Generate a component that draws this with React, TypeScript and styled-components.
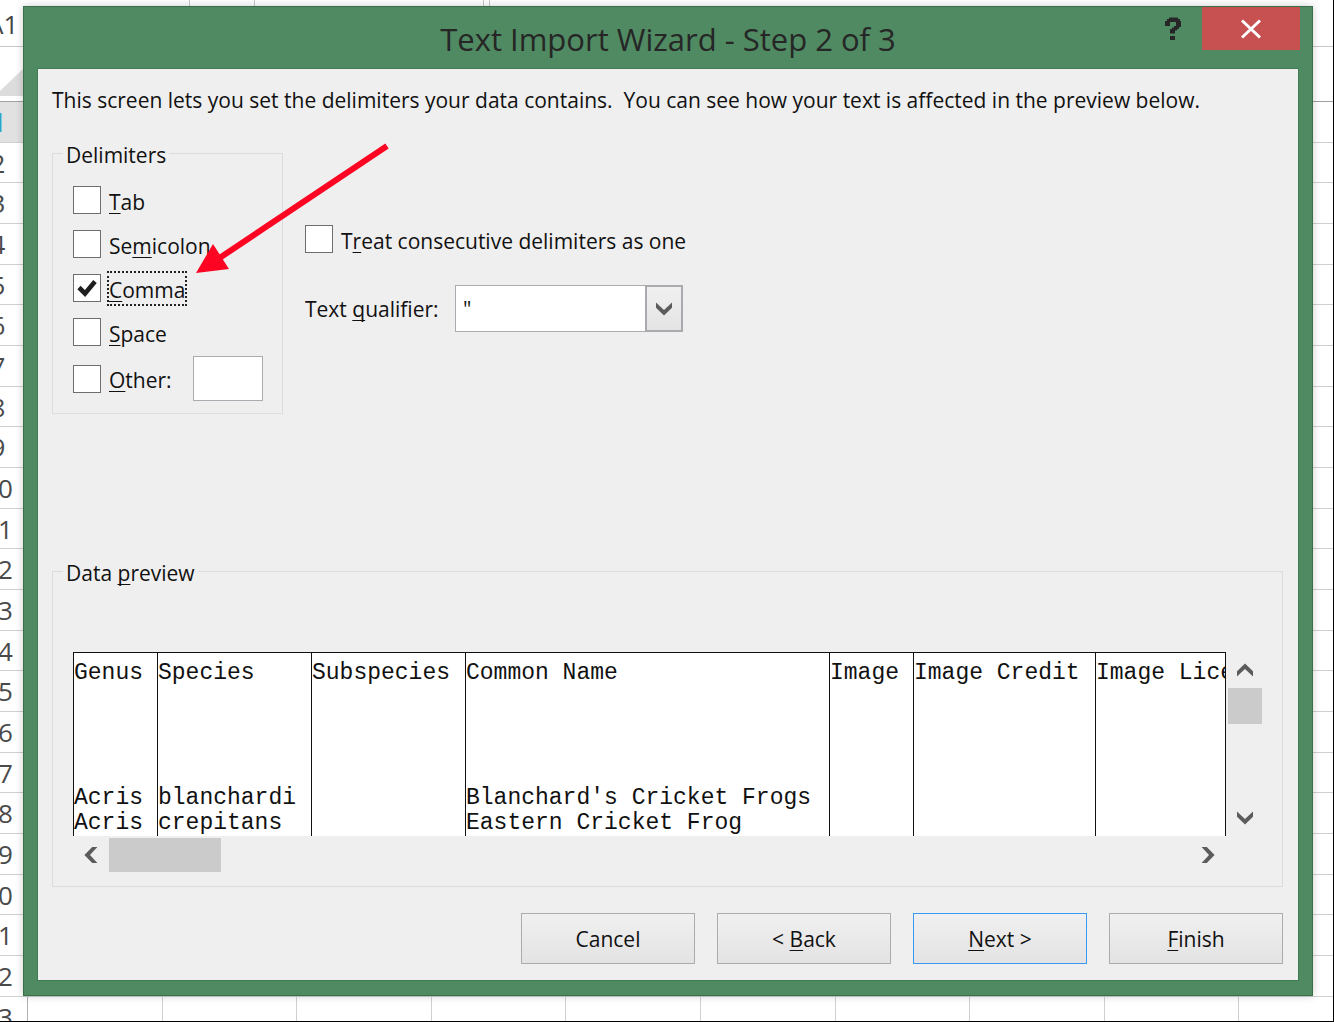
import React from "react";
import styled, { createGlobalStyle } from "styled-components";

const GlobalStyle = createGlobalStyle`
  *, *::before, *::after { box-sizing: border-box; }
  body {
    margin: 0;
    background: #fff;
    color: #111;
    font-family: "Open Sans", "Noto Sans", sans-serif;
    font-size: 21px;
    line-height: 28px;
  }
  button, input, select { font: inherit; color: inherit; margin: 0; padding: 0; border-radius: 0; }
  u { text-decoration-thickness: 1px; text-underline-offset: 3px; text-decoration-skip-ink: none; }
`;

const Desktop = styled.div`
  display: grid;
  grid-template: minmax(0, 1fr) / minmax(0, 1fr);
  height: 100vh;
  min-height: 940px;
  overflow: hidden;
  border: solid #000;
  border-width: 0 1px 1px 0;
`;

/* Worksheet behind the dialog */

const Sheet = styled.div`
  grid-area: 1 / 1;
  display: flex;
  flex-direction: column;
  min-width: 0;
  overflow: hidden;
  color: #444;
  font-size: 26px;
  line-height: 40px;
`;

const FormulaBar = styled.div`
  display: flex;
  flex: none;
  height: 47px;
  border-bottom: 1px solid #c8c8c8;
`;

const NameBox = styled.div`
  width: 190px;
  padding-top: 4px;
  border-right: 1px solid #c8c8c8;
  text-indent: -13px;
`;

const BarCell = styled.div<{ $width: number }>`
  width: ${(p) => p.$width}px;
  border-right: 1px solid #c8c8c8;
`;

const ColumnHeads = styled.div`
  flex: none;
  height: 55px;
  padding-top: 18px;
  border-bottom: 1px solid #a0a0a0;
`;

const SelectAll = styled.div`
  width: 27px;
  height: 31px;
  background: #dcdcdc;
  clip-path: polygon(0 100%, 0 84%, 100% 0, 100% 100%);
`;

const SheetRow = styled.div<{ $share: number; $last?: boolean }>`
  display: flex;
  flex: ${(p) => p.$share} 1 0;
  min-height: 0;
  border-bottom: ${(p) => (p.$last ? "0" : "1px solid #d0d0d0")};
`;

const RowHead = styled.div<{ $active?: boolean }>`
  flex: none;
  width: 59px;
  margin-left: -31px;
  border-right: 1px solid #b0b0b0;
  text-align: center;
  background: ${(p) => (p.$active ? "#e1e1e1" : "#fff")};
  color: ${(p) => (p.$active ? "#2ea3c4" : "#4a4a4a")};
  font-weight: ${(p) => (p.$active ? 700 : 400)};
`;

const SheetCell = styled.div<{ $share: number }>`
  flex: ${(p) => p.$share} 1 0;
  border-right: 1px solid #d0d0d0;
  &:last-child { border-right: 0; }
`;

/* Dialog */

const Dialog = styled.section`
  grid-area: 1 / 1;
  z-index: 1;
  display: flex;
  flex-direction: column;
  min-width: 0;
  margin: 6px 20px 25px 23px;
  border: 1px solid #37704b;
  background: #508a62;
  box-shadow: 0 0 8px rgba(0, 0, 0, 0.2);
`;

const TitleBar = styled.header`
  display: grid;
  grid-template-columns: 1fr auto 1fr;
  height: 61px;
`;

const Title = styled.h1`
  grid-column: 2;
  margin: 0;
  color: #262626;
  font-size: 31px;
  font-weight: 400;
  line-height: 64px;
`;

const WindowButtons = styled.div`
  display: flex;
  justify-content: flex-end;
  align-items: flex-start;
  padding-right: 12px;
`;

const WindowButton = styled.button<{ $close?: boolean }>`
  display: grid;
  place-items: center;
  width: ${(p) => (p.$close ? 98 : 58)}px;
  height: 43px;
  border: 0;
  background: ${(p) => (p.$close ? "#c75050" : "transparent")};
`;

const Panel = styled.form`
  display: flex;
  flex: 1;
  flex-direction: column;
  margin: 0 13px 14px;
  padding: 17px 15px 16px 14px;
  border: 1px solid #3f7b53;
  background: #efefef;
`;

const Intro = styled.p`
  margin: 0 0 25px;
  white-space: pre-wrap;
`;

const Options = styled.div`
  position: relative;
  display: flex;
  align-items: flex-start;
  gap: 22px;
`;

const Group = styled.fieldset`
  min-width: 0;
  margin: 0;
  padding: 0 10px 12px;
  border: 1px solid #dcdcdc;
`;

const Legend = styled.legend`
  padding: 4px 3px 0;
  line-height: 24px;
`;

const DelimiterList = styled.div`
  display: grid;
  gap: 16px;
  width: 209px;
  padding: 19px 0 10px 10px;
`;

const OtherRow = styled.div`
  display: flex;
  justify-content: space-between;
  align-items: center;
  padding: 0 9px 0 10px;
`;

const CheckLabel = styled.label`
  display: flex;
  align-items: center;
  gap: 8px;
  height: 28px;
`;

const CheckCell = styled.span`
  display: grid;
  width: 28px;
  height: 28px;
  > * { grid-area: 1 / 1; }
  > svg { place-self: center; pointer-events: none; }
`;

const CheckInput = styled.input`
  appearance: none;
  width: 28px;
  height: 28px;
  border: 1px solid #6e6e6e;
  background: #fff;
`;

const CheckText = styled.span<{ $focused?: boolean }>`
  padding-top: 3px;
  outline: ${(p) => (p.$focused ? "2px dotted #222" : "none")};
`;

const OtherInput = styled.input`
  width: 70px;
  height: 45px;
  padding: 0 8px;
  border: 1px solid #ababb2;
  background: #fff;
`;

const SideOptions = styled.div`
  display: grid;
  gap: 32px;
  padding-top: 86px;
`;

const QualifierRow = styled.div`
  display: flex;
  align-items: center;
  > label { width: 150px; }
`;

const SelectFrame = styled.div`
  display: grid;
  grid-template-columns: 1fr 38px;
  width: 228px;
  height: 47px;
`;

const Select = styled.select`
  grid-area: 1 / 1 / 2 / 3;
  appearance: none;
  padding: 0 44px 0 7px;
  border: 1px solid #ababb2;
  background: #fff;
`;

const SelectArrow = styled.span`
  grid-area: 1 / 2;
  z-index: 1;
  display: grid;
  place-items: center;
  border: 2px solid #a9a9ae;
  background: linear-gradient(#f0f0f0, #e4e4e4);
  pointer-events: none;
`;

const Pointer = styled.svg`
  position: absolute;
  left: 144px;
  top: 4px;
  pointer-events: none;
`;

const PreviewGroup = styled(Group)`
  margin-top: auto;
  padding-bottom: 14px;
`;

const PreviewGrid = styled.div`
  display: grid;
  grid-template-columns: minmax(0, 1fr) 34px;
  gap: 2px;
  padding: 67px 10px 0;
`;

const TableFrame = styled.div`
  height: 184px;
  overflow: hidden;
  border: solid #111;
  border-width: 1px 1px 0 0;
  background: #fff;
`;

const DataTable = styled.table`
  width: 100%;
  table-layout: fixed;
  border-collapse: separate;
  border-spacing: 0;
  font-family: "Courier New", "Liberation Mono", monospace;
  font-size: 23px;
  line-height: 25px;
  th, td {
    height: 25px;
    padding: 0;
    overflow: hidden;
    border-left: 1px solid #111;
    font-weight: 400;
    text-align: left;
    white-space: nowrap;
  }
  th { height: 33px; padding-top: 8px; }
`;

const ScrollBar = styled.div<{ $vertical?: boolean }>`
  display: flex;
  flex-direction: ${(p) => (p.$vertical ? "column" : "row")};
`;

const ScrollButton = styled.button`
  display: grid;
  place-items: center;
  flex: none;
  width: 36px;
  height: 34px;
  border: 0;
  background: transparent;
`;

const VerticalButton = styled(ScrollButton)`
  width: 34px;
  height: 36px;
`;

const Track = styled.div`
  flex: 1;
`;

const Thumb = styled.div<{ $vertical?: boolean }>`
  width: ${(p) => (p.$vertical ? "34px" : "112px")};
  height: ${(p) => (p.$vertical ? "36px" : "34px")};
  background: #cbcbcb;
`;

const Actions = styled.footer`
  display: flex;
  justify-content: flex-end;
  gap: 22px;
  margin-top: 26px;
`;

const ActionButton = styled.button<{ $primary?: boolean }>`
  width: 174px;
  height: 51px;
  border: 1px solid ${(p) => (p.$primary ? "#3c97f2" : "#acacac")};
  background: linear-gradient(#f0f0f0, #e3e3e3);
`;

const turns = { down: 0, left: 90, up: 180, right: 270 };

const Chevron = ({ to }: { to: keyof typeof turns }) => (
  <svg width="18" height="18" viewBox="0 0 18 18" aria-hidden="true">
    <path
      d="M1 2.6 L9 10 L17 2.6 V7.8 L9 15.6 L1 7.8 Z"
      fill="#5c5c5c"
      transform={`rotate(${turns[to]} 9 9)`}
    />
  </svg>
);

type CheckProps = { checked?: boolean; focused?: boolean; children: React.ReactNode };

const Check = ({ checked = false, focused, children }: CheckProps) => {
  const [on, setOn] = React.useState(checked);
  return (
    <CheckLabel>
      <CheckCell>
        <CheckInput type="checkbox" checked={on} onChange={() => setOn(!on)} />
        {on && (
          <svg width="20" height="18" viewBox="0 0 20 18" aria-hidden="true">
            <path d="M2 8.5 L8 14.5 L18 2.5" fill="none" stroke="#1e1e1e" strokeWidth="4.6" />
          </svg>
        )}
      </CheckCell>
      <CheckText $focused={focused}>{children}</CheckText>
    </CheckLabel>
  );
};

const columns: { name: string; width?: number }[] = [
  { name: "Genus", width: 84 },
  { name: "Species", width: 154 },
  { name: "Subspecies", width: 154 },
  { name: "Common Name", width: 364 },
  { name: "Image", width: 84 },
  { name: "Image Credit", width: 182 },
  { name: "Image License" },
];

const records: string[][] = [
  [],
  [],
  [],
  [],
  ["Acris", "blanchardi", "", "Blanchard's Cricket Frogs"],
  ["Acris", "crepitans", "", "Eastern Cricket Frog"],
];

const rowNumbers = Array.from({ length: 23 }, (_, i) => i + 1);
const lastRow = rowNumbers.length;

/* Nine whole worksheet columns, then the part of the tenth that fits. */
const cellShares = [10, 10, 10, 10, 10, 10, 10, 10, 10, 7];

export default function App() {
  return (
    <>
      <GlobalStyle />
      <Desktop>
        <Sheet>
          <FormulaBar>
            <NameBox>A1</NameBox>
            <BarCell $width={65} />
            <BarCell $width={229} />
            <BarCell $width={6} />
          </FormulaBar>
          <ColumnHeads>
            <SelectAll />
          </ColumnHeads>
          {rowNumbers.map((n) => (
            <SheetRow key={n} $share={n === lastRow ? 25 : 41} $last={n === lastRow}>
              <RowHead $active={n === 1}>{n}</RowHead>
              {cellShares.map((share, i) => (
                <SheetCell key={i} $share={share} />
              ))}
            </SheetRow>
          ))}
        </Sheet>

        <Dialog role="dialog" aria-labelledby="wizard-title">
          <TitleBar>
            <Title id="wizard-title">Text Import Wizard - Step 2 of 3</Title>
            <WindowButtons>
              <WindowButton type="button" aria-label="Help">
                <svg width="18" height="24" viewBox="0 0 18 24" aria-hidden="true">
                  <path
                    d="M1 9 V4 H3 V2 H5 V0.5 H14 V2 H16 V4 H17 V10 H15 V12 H13 V13.5 H11 V16.5 H6 V12 H8 V10.5 H10 V9 H12 V5 H6 V9 Z M6 19 H11 V23 H6 Z"
                    fill="#262626"
                  />
                </svg>
              </WindowButton>
              <WindowButton type="button" $close aria-label="Close">
                <svg width="22" height="20" viewBox="0 0 22 20" aria-hidden="true">
                  <path d="M2 1.5 L20 18.5 M20 1.5 L2 18.5" stroke="#fff" strokeWidth="3" />
                </svg>
              </WindowButton>
            </WindowButtons>
          </TitleBar>

          <Panel onSubmit={(e) => e.preventDefault()}>
            <Intro>
              {"This screen lets you set the delimiters your data contains.  You can see how your text is affected in the preview below."}
            </Intro>

            <Options>
              <Group>
                <Legend>Delimiters</Legend>
                <DelimiterList>
                  <Check><u>T</u>ab</Check>
                  <Check>Se<u>m</u>icolon</Check>
                  <Check checked focused><u>C</u>omma</Check>
                  <Check><u>S</u>pace</Check>
                </DelimiterList>
                <OtherRow>
                  <Check><u>O</u>ther:</Check>
                  <OtherInput type="text" aria-label="Other delimiter" />
                </OtherRow>
              </Group>

              <SideOptions>
                <Check>T<u>r</u>eat consecutive delimiters as one</Check>
                <QualifierRow>
                  <label htmlFor="qualifier">Text <u>q</u>ualifier:</label>
                  <SelectFrame>
                    <Select id="qualifier" defaultValue={'"'}>
                      <option>{'"'}</option>
                    </Select>
                    <SelectArrow>
                      <Chevron to="down" />
                    </SelectArrow>
                  </SelectFrame>
                </QualifierRow>
              </SideOptions>

              <Pointer width="194" height="132" viewBox="0 0 194 132" aria-hidden="true">
                <path d="M191 3 L22 116" stroke="#fe0423" strokeWidth="6" />
                <path d="M0 130 L17 101 L33 126 Z" fill="#fe0423" />
              </Pointer>
            </Options>

            <PreviewGroup>
              <Legend>Data <u>p</u>review</Legend>
              <PreviewGrid>
                <TableFrame>
                  <DataTable>
                    <colgroup>
                      {columns.map((c) => (
                        <col key={c.name} width={c.width} />
                      ))}
                    </colgroup>
                    <thead>
                      <tr>
                        {columns.map((c) => (
                          <th key={c.name} scope="col">{c.name}</th>
                        ))}
                      </tr>
                    </thead>
                    <tbody>
                      {records.map((record, r) => (
                        <tr key={r}>
                          {columns.map((c, i) => (
                            <td key={c.name}>{record[i]}</td>
                          ))}
                        </tr>
                      ))}
                    </tbody>
                  </DataTable>
                </TableFrame>
                <ScrollBar $vertical>
                  <VerticalButton type="button" aria-label="Scroll up">
                    <Chevron to="up" />
                  </VerticalButton>
                  <Track>
                    <Thumb $vertical />
                  </Track>
                  <VerticalButton type="button" aria-label="Scroll down">
                    <Chevron to="down" />
                  </VerticalButton>
                </ScrollBar>
                <ScrollBar>
                  <ScrollButton type="button" aria-label="Scroll left">
                    <Chevron to="left" />
                  </ScrollButton>
                  <Track>
                    <Thumb />
                  </Track>
                  <ScrollButton type="button" aria-label="Scroll right">
                    <Chevron to="right" />
                  </ScrollButton>
                </ScrollBar>
              </PreviewGrid>
            </PreviewGroup>

            <Actions>
              <ActionButton type="button">Cancel</ActionButton>
              <ActionButton type="button">&lt; <u>B</u>ack</ActionButton>
              <ActionButton type="submit" $primary><u>N</u>ext &gt;</ActionButton>
              <ActionButton type="button"><u>F</u>inish</ActionButton>
            </Actions>
          </Panel>
        </Dialog>
      </Desktop>
    </>
  );
}
